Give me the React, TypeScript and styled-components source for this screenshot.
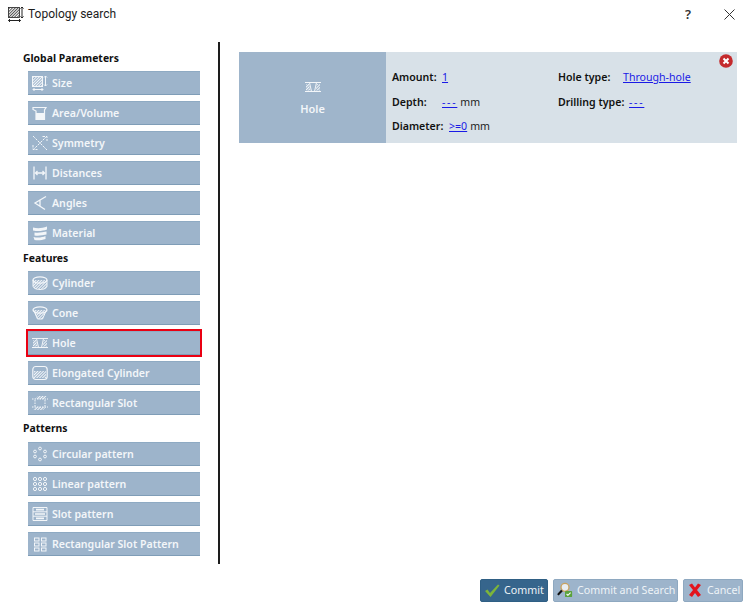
import React from "react";
import styled, { createGlobalStyle } from "styled-components";

const Global = createGlobalStyle`
  html, body { margin: 0; padding: 0; background: #fff; }
  body { font-family: "Noto Sans", "Open Sans", sans-serif; font-size: 10.6px; color: #111; }
`;

const Dialog = styled.div`
  width: 750px;
  height: 610px;
  display: flex;
  flex-direction: column;
  overflow: hidden;
  background: #fff;
`;

const TitleBar = styled.header`
  height: 42px;
  flex: none;
  display: flex;
  align-items: flex-start;
  padding: 6px 15px 0 8px;
  box-sizing: border-box;
`;

const TitleText = styled.span`
  margin-left: 4px;
  font-family: Roboto, "Noto Sans", sans-serif;
  font-size: 12px;
  line-height: 16px;
  color: #1c1c1c;
`;

const TitleControls = styled.div`
  margin-left: auto;
  display: flex;
  align-items: center;
  gap: 33px;
  height: 16px;
`;

const HelpMark = styled.span`
  font-size: 13px;
  font-weight: 600;
  color: #333;
`;

const Body = styled.main`
  flex: none;
  height: 522px;
  display: flex;
`;

const Sidebar = styled.nav`
  width: 220px;
  flex: none;
  border-right: 2px solid #1d1d1d;
  padding: 9px 18px 0 23px;
  box-sizing: border-box;
  display: flex;
  flex-direction: column;
  gap: 6px;
`;

const SectionLabel = styled.div<{ $extra?: number }>`
  height: 14px;
  line-height: 15px;
  margin-bottom: ${(p) => p.$extra ?? 0}px;
  font-weight: 700;
  font-size: 10.4px;
  color: #111;
`;

const ToolButton = styled.button<{ $active?: boolean }>`
  width: 172px;
  height: 24px;
  margin-left: 5px;
  padding: 0 0 1px 4px;
  box-sizing: border-box;
  display: flex;
  align-items: center;
  gap: 4px;
  background: #9db4cb;
  border: none;
  border-top: 1px solid #8eaac3;
  border-bottom: 1px solid #7f9db7;
  outline: ${(p) => (p.$active ? "2px solid #ea0012" : "none")};
  color: #f3f6f9;
  font-family: inherit;
  font-size: 10.6px;
  font-weight: 600;
  text-align: left;
`;

const IconBox = styled.svg`
  width: 16px;
  height: 16px;
  flex: none;
  fill: none;
  stroke: #f3f6f9;
  stroke-width: 1;
`;

const Content = styled.section`
  flex: 1;
  padding: 10px 13px 0 19px;
`;

const Card = styled.article`
  position: relative;
  height: 91px;
  display: flex;
  background: #d8e1e8;
`;

const CardHead = styled.div`
  width: 147px;
  flex: none;
  background: #9fb5cb;
  color: #f3f6f9;
  font-weight: 600;
  font-size: 11px;
  display: flex;
  flex-direction: column;
  align-items: center;
  justify-content: center;
  gap: 6px;
  box-sizing: border-box;
`;

const CardBody = styled.div`
  flex: 1;
  display: grid;
  grid-template-columns: 166px 1fr;
  padding: 18px 0 0 6px;
`;

const Column = styled.div`
  display: flex;
  flex-direction: column;
  gap: 9.5px;
`;

const Row = styled.div`
  display: flex;
  height: 15px;
  line-height: 15px;
  align-items: center;
  white-space: nowrap;
`;

const FieldLabel = styled.span<{ $w: number }>`
  width: ${(p) => p.$w}px;
  flex: none;
  font-weight: 600;
  color: #111;
`;

const ValueLink = styled.a<{ $wide?: boolean }>`
  color: #1a1ae6;
  text-decoration: underline;
  cursor: pointer;
  letter-spacing: ${(p) => (p.$wide ? "1.7px" : "0")};
`;

const Unit = styled.span`
  margin-left: 3px;
  color: #222;
`;

const CloseBadge = styled.svg`
  position: absolute;
  top: 2px;
  right: 4px;
  width: 14px;
  height: 14px;
`;

const Footer = styled.footer`
  flex: 1;
  display: flex;
  justify-content: flex-end;
  gap: 5px;
  padding: 15px 7px 0 0;
`;

const FootButton = styled.button<{ $primary?: boolean; $w: number }>`
  width: ${(p) => p.$w}px;
  height: 23px;
  box-sizing: border-box;
  display: flex;
  align-items: center;
  gap: 4px;
  padding: 0 0 1px 3px;
  border-radius: 2px;
  border: 1px solid ${(p) => (p.$primary ? "#2f5f84" : "#8ea8c0")};
  background: ${(p) => (p.$primary ? "#36658c" : "#9db4cb")};
  color: #eef3f7;
  font-family: inherit;
  font-size: 10.7px;
  white-space: nowrap;
`;

const icons: Record<string, React.ReactNode> = {
  size: (
    <>
      <rect x="0.500" y="1.500" width="10" height="10" fill="url(#hatch)" />
      <path d="M13.500 1v10M12 2.500l1.500-1.500 1.500 1.500M12 9.500l1.500 1.500 1.500-1.500M1 14.500h10M2.500 13l-1.500 1.500 1.500 1.500M9.500 13l1.500 1.500-1.500 1.500" />
    </>
  ),
  area: (
    <>
      <path d="M1 2.500h13l-1.500 2.500v9.500H4V6L1 4.500z" strokeWidth="1.200" />
      <path d="M4 8h8.500v6.500H4z" fill="#f3f6f9" stroke="none" />
    </>
  ),
  symmetry: <path d="M1 1l14 14M15 1L1 15M10.500 1.500H15V6M1 10v4.500h4.500" strokeDasharray="2.500 1" />,
  distances: <path d="M2 1.500v13M14 1.500v13M3.500 8h9M5.500 6l-2 2 2 2M10.500 6l2 2-2 2" strokeWidth="1.300" />,
  angles: <path d="M14 1.500L3 8l10 6.500M8 4.500v7" strokeWidth="1.300" />,
  material: (
    <path
      d="M1 2.500c4 1 9 1 14-1v3c-4 1.500-9 2-14 1zM2.500 7.500c4 .5 8 0 12-1v3c-4 1-8 1.500-12 1zM1.500 12c4 1 9 .5 12-1v3c-4 1.500-8 1.500-11 1z"
      fill="#f3f6f9"
      stroke="none"
    />
  ),
  cylinder: (
    <>
      <path d="M1 5v6c0 2 3 3.500 7 3.500s7-1.500 7-3.500V5" fill="url(#hatch)" />
      <ellipse cx="8" cy="5" rx="7" ry="3.200" strokeWidth="1.300" />
    </>
  ),
  cone: (
    <>
      <path d="M1.500 5l4 9h5l4-9" fill="url(#hatch)" />
      <ellipse cx="8" cy="5" rx="7" ry="3.200" strokeWidth="1.300" />
    </>
  ),
  hole: (
    <>
      <path d="M0 3.500h16M0 12.500h16M4.500 3.500l2 9M11.500 3.500l-2 9" />
      <path d="M1 5h3l1.500 6.500H1zM15 5h-3l-1.500 6.500H15z" fill="url(#hatch)" stroke="none" />
    </>
  ),
  elongated: (
    <>
      <rect x="0.800" y="1.500" width="14.400" height="13" rx="3" strokeWidth="1.200" />
      <rect x="2" y="6" width="12" height="7" fill="url(#hatch)" stroke="none" />
    </>
  ),
  slot: (
    <>
      <path d="M3 5v7M13 5v7M0 4h16M0 12h16" strokeDasharray="1.500 1" />
      <path d="M3 4l3-3h9l-3 3zM1 15l3-3h10l-3 3z" fill="url(#hatch)" stroke="none" />
    </>
  ),
  circular: (
    <>
      <circle cx="8" cy="2.500" r="1.400" />
      <circle cx="3" cy="5.500" r="1.400" />
      <circle cx="13" cy="5.500" r="1.400" />
      <circle cx="3" cy="10.500" r="1.400" />
      <circle cx="13" cy="10.500" r="1.400" />
      <circle cx="8" cy="13.500" r="1.400" />
    </>
  ),
  linear: (
    <>
      {[3, 8, 13].flatMap((x) =>
        [3, 8, 13].map((y) => <circle key={`${x}-${y}`} cx={x} cy={y} r="1.600" />)
      )}
    </>
  ),
  slotPattern: (
    <>
      <path d="M1 1.500h14v13H1zM1 5.800h14M1 10.200h14" />
      <path d="M4 3.600h8M3 8h10M4 12.400h8" strokeWidth="1.600" />
    </>
  ),
  rectPattern: (
    <>
      {[2, 7, 12].flatMap((y) =>
        [2.500, 9.500].map((x) => <rect key={`${x}-${y}`} x={x} y={y} width="4.500" height="3" />)
      )}
    </>
  ),
};

const Icon = ({ name }: { name: string }) => <IconBox viewBox="0 0 16 16">{icons[name]}</IconBox>;

type Item = { label: string; icon: string; active?: boolean };

const sections: { title: string; extra?: number; items: Item[] }[] = [
  {
    title: "Global Parameters",
    items: [
      { label: "Size", icon: "size" },
      { label: "Area/Volume", icon: "area" },
      { label: "Symmetry", icon: "symmetry" },
      { label: "Distances", icon: "distances" },
      { label: "Angles", icon: "angles" },
      { label: "Material", icon: "material" },
    ],
  },
  {
    title: "Features",
    items: [
      { label: "Cylinder", icon: "cylinder" },
      { label: "Cone", icon: "cone" },
      { label: "Hole", icon: "hole", active: true },
      { label: "Elongated Cylinder", icon: "elongated" },
      { label: "Rectangular Slot", icon: "slot" },
    ],
  },
  {
    title: "Patterns",
    extra: 1,
    items: [
      { label: "Circular pattern", icon: "circular" },
      { label: "Linear pattern", icon: "linear" },
      { label: "Slot pattern", icon: "slotPattern" },
      { label: "Rectangular Slot Pattern", icon: "rectPattern" },
    ],
  },
];

export default function App() {
  return (
    <Dialog>
      <Global />
      <svg width="0" height="0" style={{ position: "absolute" }}>
        <defs>
          <pattern id="hatch" width="2" height="2" patternUnits="userSpaceOnUse" patternTransform="rotate(45)">
            <rect width="1" height="2" fill="#f3f6f9" />
          </pattern>
          <pattern id="hatchDark" width="2" height="2" patternUnits="userSpaceOnUse" patternTransform="rotate(45)">
            <rect width="1" height="2" fill="#555" />
          </pattern>
        </defs>
      </svg>
      <TitleBar>
        <svg width="16" height="16" viewBox="0 0 16 16" fill="none" stroke="#222">
          <rect x="0.500" y="1.500" width="11" height="10" fill="url(#hatchDark)" strokeWidth="0.800" />
          <path d="M14 1v11M12.500 2.500L14 1l1.500 1.500M12.500 10.500L14 12l1.500-1.500M0.500 14.500h12M2 13l-1.500 1.500L2 16M11 13l1.500 1.500L11 16" />
        </svg>
        <TitleText>Topology search</TitleText>
        <TitleControls>
          <HelpMark>?</HelpMark>
          <svg width="11" height="11" viewBox="0 0 11 11" stroke="#333" strokeWidth="1">
            <path d="M0.500 0.500l10 10M10.500 0.500l-10 10" />
          </svg>
        </TitleControls>
      </TitleBar>
      <Body>
        <Sidebar>
          {sections.map((s) => (
            <React.Fragment key={s.title}>
              <SectionLabel $extra={s.extra}>{s.title}</SectionLabel>
              {s.items.map((it) => (
                <ToolButton key={it.label} $active={it.active}>
                  <Icon name={it.icon} />
                  {it.label}
                </ToolButton>
              ))}
            </React.Fragment>
          ))}
        </Sidebar>
        <Content>
          <Card>
            <CardHead>
              <Icon name="hole" />
              Hole
            </CardHead>
            <CardBody>
              <Column>
                <Row>
                  <FieldLabel $w={50}>Amount:</FieldLabel>
                  <ValueLink>1</ValueLink>
                </Row>
                <Row>
                  <FieldLabel $w={50}>Depth:</FieldLabel>
                  <ValueLink $wide>---</ValueLink>
                  <Unit>mm</Unit>
                </Row>
                <Row>
                  <FieldLabel $w={57}>Diameter:</FieldLabel>
                  <ValueLink>&gt;=0</ValueLink>
                  <Unit>mm</Unit>
                </Row>
              </Column>
              <Column>
                <Row>
                  <FieldLabel $w={65}>Hole type:</FieldLabel>
                  <ValueLink>Through-hole</ValueLink>
                </Row>
                <Row>
                  <FieldLabel $w={71}>Drilling type:</FieldLabel>
                  <ValueLink $wide>---</ValueLink>
                </Row>
              </Column>
            </CardBody>
            <CloseBadge viewBox="0 0 14 14">
              <circle cx="7" cy="7" r="6.800" fill="#c42a2d" />
              <path d="M4.500 4.500l5 5M9.500 4.500l-5 5" stroke="#fff" strokeWidth="2" />
            </CloseBadge>
          </Card>
        </Content>
      </Body>
      <Footer>
        <FootButton $primary $w={68}>
          <svg width="16" height="16" viewBox="0 0 16 16">
            <path d="M1 9l2.500-1.500L6 11 14 2.500l1.500 1L6.500 15z" fill="#7db53a" />
          </svg>
          Commit
        </FootButton>
        <FootButton $w={125}>
          <svg width="16" height="16" viewBox="0 0 18 18" fill="none">
            <circle cx="9" cy="6" r="4.500" fill="#e9edf0" stroke="#c9a15f" strokeWidth="1.500" />
            <path d="M5.500 9.500L1 14.500" stroke="#111" strokeWidth="2.400" />
            <rect x="9" y="10" width="8" height="7" rx="1" fill="#5ba23c" />
            <path d="M10.800 13.500l1.500 1.500 3-3" stroke="#fff" strokeWidth="1.200" />
          </svg>
          Commit and Search
        </FootButton>
        <FootButton $w={60}>
          <svg width="16" height="16" viewBox="0 0 16 16">
            <path d="M2 3l3-1.500L8 5.500l3-4 3 1.500-4 5 4 5-3 2-3-4-3 4-3-2 4-5z" fill="#e3141c" />
          </svg>
          Cancel
        </FootButton>
      </Footer>
    </Dialog>
  );
}
